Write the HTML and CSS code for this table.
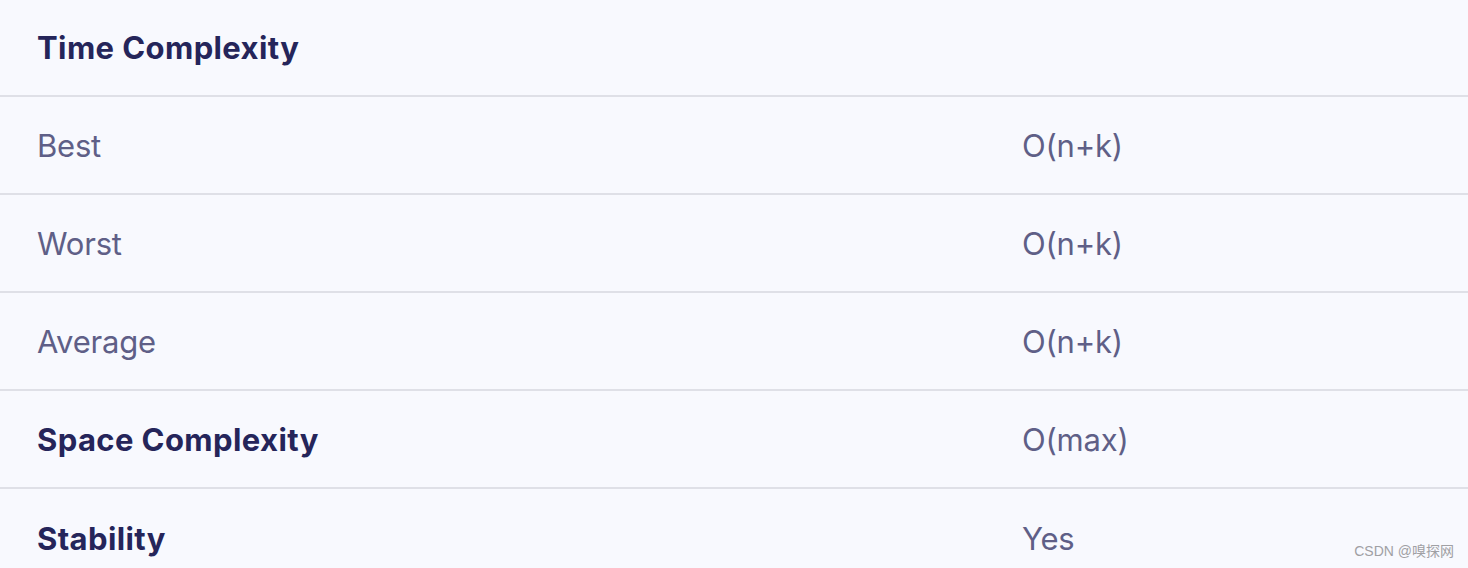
FILE: index.html
```html
<!DOCTYPE html>
<html>
<head>
<meta charset="utf-8">
<link rel="stylesheet" href="styles.css">
</head>
<body>
<div class="table">
  <div class="row first"><div class="label strong">Time Complexity</div><div class="value"></div></div>
  <div class="row"><div class="label">Best</div><div class="value">O(n+k)</div></div>
  <div class="row"><div class="label">Worst</div><div class="value">O(n+k)</div></div>
  <div class="row"><div class="label">Average</div><div class="value">O(n+k)</div></div>
  <div class="row"><div class="label strong">Space Complexity</div><div class="value">O(max)</div></div>
  <div class="row last"><div class="label strong">Stability</div><div class="value">Yes</div></div>
</div>
<div class="watermark">CSDN @嗅探网</div>
</body>
</html>
```
FILE: styles.css
```css
html, body {
  margin: 0;
  padding: 0;
  background: #f8f9fe;
  height: 568px;
  overflow: hidden;
}
body {
  font-family: "Inter", "Noto Sans", sans-serif;
  position: relative;
}
.table {
  display: flex;
  flex-direction: column;
}
.row {
  display: grid;
  grid-template-columns: 985px 1fr;
  align-items: center;
  border-bottom: 2px solid #dfe0e7;
  padding-left: 37px;
  box-sizing: border-box;
  height: 98px;
}
.row.first {
  height: 97px;
}
.row.last {
  border-bottom: none;
}
.label, .value {
  font-size: 31px;
  color: #5f5f87;
  font-weight: 400;
  letter-spacing: -0.2px;
}
.label.strong {
  color: #25255a;
  font-weight: 700;
  letter-spacing: 0.4px;
}
.watermark {
  position: absolute;
  right: 14px;
  bottom: 8px;
  font-family: "Liberation Sans", "Noto Sans CJK SC", sans-serif;
  font-size: 14px;
  color: #a0a0a4;
}
```
